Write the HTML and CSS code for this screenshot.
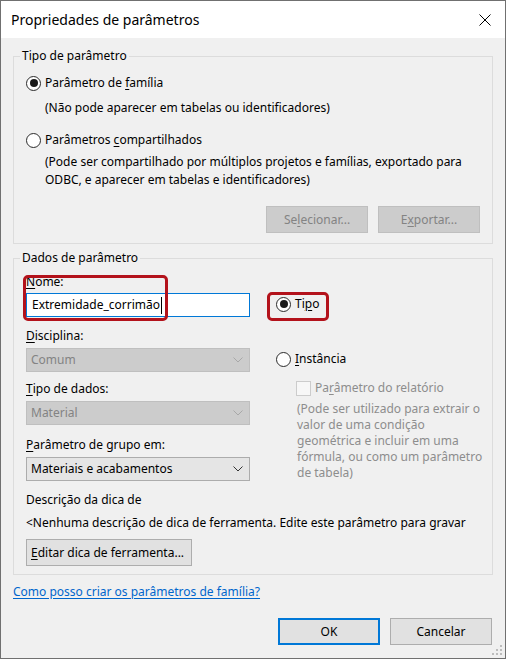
FILE: index.html
```html
<!DOCTYPE html>
<html lang="pt">
<head>
<meta charset="utf-8">
<title>Propriedades de parâmetros</title>
<link rel="stylesheet" href="styles.css">
</head>
<body>
<div class="window">
  <div class="titlebar">
    <span class="title">Propriedades de parâmetros</span>
    <svg class="close" width="12" height="12" viewBox="0 0 12 12"><path d="M0.5 0.5 L11.5 11.5 M11.5 0.5 L0.5 11.5" stroke="#000" stroke-width="1" fill="none"/></svg>
  </div>
  <div class="content">
    <fieldset class="group g1">
      <legend>Tipo de parâmetro</legend>
      <div class="radio r-family"><span class="rb checked"></span><span>Parâmetro de <u>f</u>amília</span></div>
      <p class="note n-family">(Não pode aparecer em tabelas ou identificadores)</p>
      <div class="radio r-shared"><span class="rb"></span><span>Parâmetros <u>c</u>ompartilhados</span></div>
      <p class="note n-shared">(Pode ser compartilhado por múltiplos projetos e famílias, exportado para<br>ODBC, e aparecer em tabelas e identificadores)</p>
      <div class="btnrow">
        <button class="btn disabled">Se<u>l</u>ecionar...</button>
        <button class="btn disabled">E<u>x</u>portar...</button>
      </div>
    </fieldset>
    <fieldset class="group g2">
      <legend>Dados de parâmetro</legend>
      <div class="cols">
        <div class="left">
          <div class="lbl l-name"><u>N</u>ome:</div>
          <div class="input">Extremidade_corrimão<span class="caret"></span></div>
          <div class="lbl l-disc"><u>D</u>isciplina:</div>
          <div class="select disabled"><span>Comum</span><svg class="chev" width="10" height="6" viewBox="0 0 10 6"><path d="M0.5 0.5 L5 5 L9.5 0.5" stroke="currentColor" fill="none"/></svg></div>
          <div class="lbl l-type"><u>T</u>ipo de dados:</div>
          <div class="select disabled"><span>Material</span><svg class="chev" width="10" height="6" viewBox="0 0 10 6"><path d="M0.5 0.5 L5 5 L9.5 0.5" stroke="currentColor" fill="none"/></svg></div>
          <div class="lbl l-group"><u>P</u>arâmetro de grupo em:</div>
          <div class="select"><span>Materiais e acabamentos</span><svg class="chev" width="10" height="6" viewBox="0 0 10 6"><path d="M0.5 0.5 L5 5 L9.5 0.5" stroke="currentColor" fill="none"/></svg></div>
        </div>
        <div class="right">
          <div class="radio r-tipo"><span class="rb checked"></span><span>Ti<u>p</u>o</span></div>
          <div class="radio r-inst"><span class="rb"></span><span><u>I</u>nstância</span></div>
          <div class="check disabled"><span class="cb"></span><span>Pa<u>r</u>âmetro do relatório</span></div>
          <p class="note grey">(Pode ser utilizado para extrair o<br>valor de uma condição<br>geométrica e incluir em uma<br>fórmula, ou como um parâmetro<br>de tabela)</p>
        </div>
      </div>
      <div class="lbl l-desc">Descrição da dica de</div>
      <div class="lbl l-none">&lt;Nenhuma descrição de dica de ferramenta. Edite este parâmetro para gravar</div>
      <button class="btn edit"><u>E</u>ditar dica de ferramenta...</button>
    </fieldset>
    <a class="help" href="#">Como posso criar os parâmetros de família?</a>
    <div class="footer">
      <button class="btn default">OK</button>
      <button class="btn">Cancelar</button>
    </div>
  </div>
  <div class="mark mark-name"></div>
  <div class="mark mark-tipo"></div>
  <svg class="grip" width="12" height="12" viewBox="0 0 12 12">
    <rect x="9" y="1" width="2" height="2" fill="#bcbcbc"/>
    <rect x="5" y="5" width="2" height="2" fill="#bcbcbc"/>
    <rect x="9" y="5" width="2" height="2" fill="#bcbcbc"/>
    <rect x="1" y="9" width="2" height="2" fill="#bcbcbc"/>
    <rect x="5" y="9" width="2" height="2" fill="#bcbcbc"/>
    <rect x="9" y="9" width="2" height="2" fill="#bcbcbc"/>
  </svg>
</div>
</body>
</html>
```
FILE: styles.css
```css
* { box-sizing: border-box; }
html, body { margin: 0; padding: 0; }
body {
  font-family: "Noto Sans", "Open Sans", sans-serif;
  font-size: 12px;
  line-height: 16px;
  color: #000;
  background: #f0f0f0;
}
u { text-decoration: underline; text-underline-offset: 2px; }

.window {
  position: relative;
  width: 506px;
  height: 659px;
  border: 1px solid #707070;
  background: #f0f0f0;
  display: flex;
  flex-direction: column;
}
.titlebar {
  height: 37px;
  flex: none;
  background: #fff;
  display: flex;
  align-items: center;
  justify-content: space-between;
  padding: 0 14px 0 10px;
}
.title { font-size: 14px; line-height: 20px; }
.close { display: block; }

.content {
  padding: 10px 12px 0 12px;
  display: flex;
  flex-direction: column;
}

.group {
  margin: 0;
  border: 1px solid #dcdcdc;
  padding: 0 6px 10px 12px;
  min-width: 0;
}
.group legend {
  padding: 0 2px;
  margin-left: -6px;
  line-height: 16px;
}
.g1 { padding-top: 11px; }
.g2 { margin-top: 6px; padding-top: 8px; padding-bottom: 8px; }

.radio {
  display: flex;
  align-items: center;
  height: 16px;
  gap: 4px;
}
.rb {
  width: 15px;
  height: 15px;
  border: 1px solid #2b2b2b;
  border-radius: 50%;
  background: #fff;
  flex: none;
  position: relative;
}
.rb.checked::after {
  content: "";
  position: absolute;
  left: 2.5px;
  top: 2.5px;
  width: 8px;
  height: 8px;
  border-radius: 50%;
  background: #1a1a1a;
}
.note { margin: 0; padding-left: 19px; }
.n-family { margin-top: 9px; }
.r-shared { margin-top: 16px; }
.n-shared { margin-top: 5px; line-height: 18px; }

.btnrow {
  display: flex;
  justify-content: flex-end;
  gap: 10px;
  margin-top: 17px;
  padding-right: 6px;
}
.btn {
  font: inherit;
  height: 27px;
  width: 102px;
  background: #e1e1e1;
  border: 1px solid #adadad;
  color: #000;
  padding: 0;
  margin: 0;
}
.btn.disabled {
  background: #cccccc;
  border-color: #bfbfbf;
  color: #838383;
}
.btn.default { border: 2px solid #0078d7; }

.cols {
  display: flex;
  gap: 26px;
}
.left { width: 224px; flex: none; display: flex; flex-direction: column; }
.right { flex: 1; display: flex; flex-direction: column; }

.lbl { line-height: 16px; white-space: nowrap; }
.input {
  margin-top: 3px;
  height: 24px;
  border: 1px solid #0078d7;
  background: #fff;
  padding: 0 5px;
  display: flex;
  align-items: center;
}
.caret { display: inline-block; width: 1px; height: 17px; background: #000; margin-left: 1px; }
.select {
  margin-top: 4px;
  height: 24px;
  border: 1px solid #acacac;
  background: #e5e5e5;
  padding: 0 6px 0 4px;
  display: flex;
  align-items: center;
  justify-content: space-between;
  color: #000;
}
.select .chev { color: #333; }
.select.disabled { background: #cccccc; border-color: #bfbfbf; color: #838383; }
.select.disabled .chev { color: #a8a8a8; }
.l-disc { margin-top: 11px; }
.l-type { margin-top: 9px; }
.l-group { margin-top: 12px; }

.r-tipo { margin-top: 22px; }
.r-inst { margin-top: 39px; }
.check { display: flex; align-items: center; gap: 4px; margin-top: 13px; padding-left: 20px; color: #8d8d8d; height: 16px; }
.cb { width: 15px; height: 15px; border: 1px solid #cccccc; background: #f7f7f7; flex: none; }
.grey { color: #8d8d8d; padding-left: 21px; margin-top: 5px; }

.l-desc { margin-top: 11px; }
.l-none { margin-top: 7px; }
.btn.edit { width: 166px; margin-top: 8px; text-align: left; padding-left: 4px; }

.help {
  margin-top: 9px;
  color: #0066cc;
  text-decoration: underline;
  text-underline-offset: 2px;
  align-self: flex-start;
}
.footer {
  display: flex;
  justify-content: flex-end;
  gap: 10px;
  margin-top: 18px;
  padding-right: 1px;
}

.mark {
  position: absolute;
  border: 3px solid #b3121b;
  border-radius: 5px;
}
.mark-name { left: 22px; top: 274px; width: 145px; height: 46px; }
.mark-tipo { left: 266px; top: 291px; width: 62px; height: 29px; }
.grip { position: absolute; right: 2px; bottom: 2px; }
```
